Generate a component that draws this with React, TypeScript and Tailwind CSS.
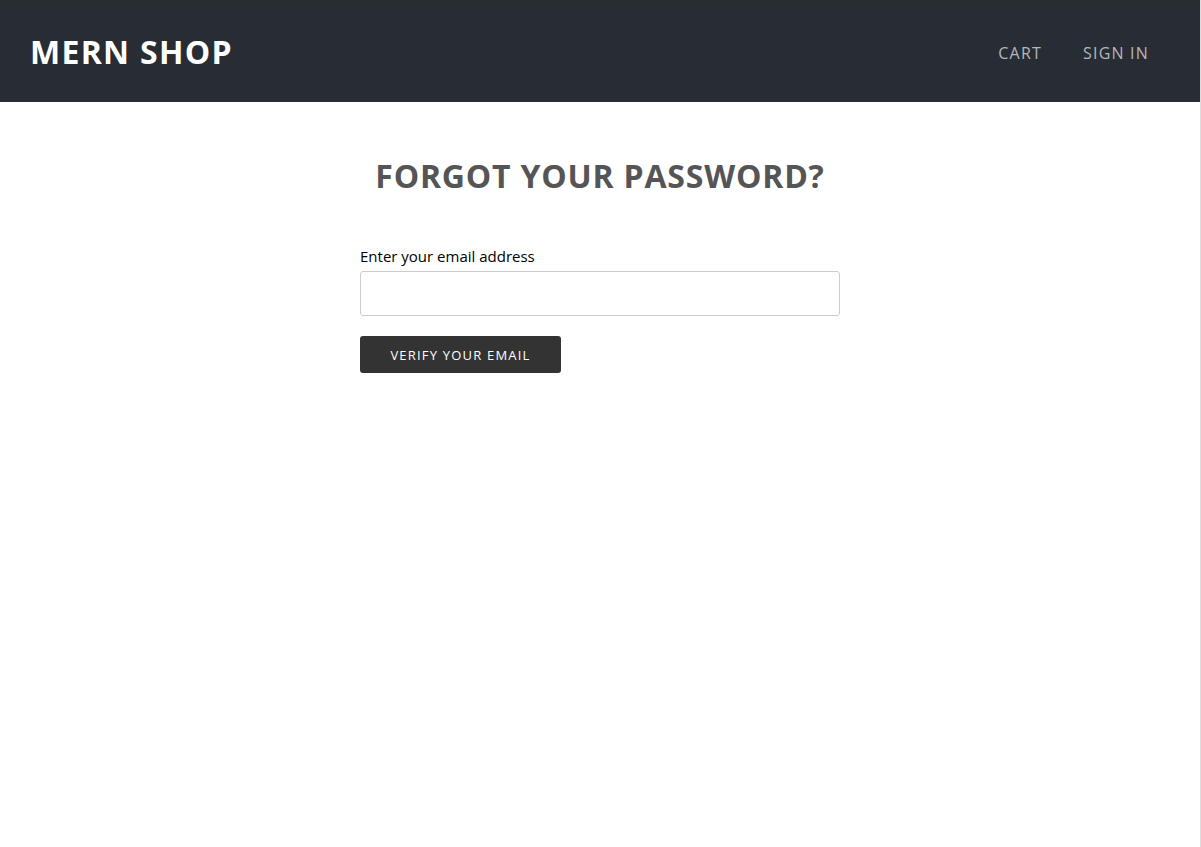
import React, { useState } from 'react';

const font = { fontFamily: '"Open Sans", "Noto Sans", sans-serif' };

const Header: React.FC = () => {
  return (
    <header className="bg-[#282c34] border-t-2 border-[#2b2b2b] h-[102px] flex items-center justify-between pl-[30px] pr-[51px]">
      <a href="#" className="text-white font-bold text-[32px] tracking-[1.3px] leading-none">
        MERN SHOP
      </a>
      <nav className="flex items-center gap-[41px] pt-[2px]">
        <a href="#" className="text-[#b5b7ba] text-[16px] tracking-[1.2px]">CART</a>
        <a href="#" className="text-[#b5b7ba] text-[16px] tracking-[1.2px]">SIGN IN</a>
      </nav>
    </header>
  );
};

const ForgotPassword: React.FC = () => {
  const [email, setEmail] = useState('');

  return (
    <main className="flex justify-center">
      <div className="w-[480px] pt-[52px]">
        <h1 className="text-center text-[#555555] font-bold text-[32px] tracking-[0.8px] leading-[44px]">
          FORGOT YOUR PASSWORD?
        </h1>
        <form className="mt-[47px]" onSubmit={(e) => e.preventDefault()}>
          <label htmlFor="email" className="block text-[15px] text-black leading-[22px] mb-[4px]">
            Enter your email address
          </label>
          <input
            id="email"
            type="email"
            value={email}
            onChange={(e) => setEmail(e.target.value)}
            className="block w-full h-[45px] border border-[#cccccc] rounded-[3px] px-3 outline-none"
          />
          <button
            type="submit"
            className="mt-[20px] w-[201px] h-[37px] pt-[2px] bg-[#333333] text-white text-[13px] tracking-[1.2px] rounded-[3px]"
          >
            VERIFY YOUR EMAIL
          </button>
        </form>
      </div>
    </main>
  );
};

export default function App() {
  return (
    <div className="min-h-screen bg-white border-r border-[#dddddd]" style={font}>
      <Header />
      <ForgotPassword />
    </div>
  );
}
